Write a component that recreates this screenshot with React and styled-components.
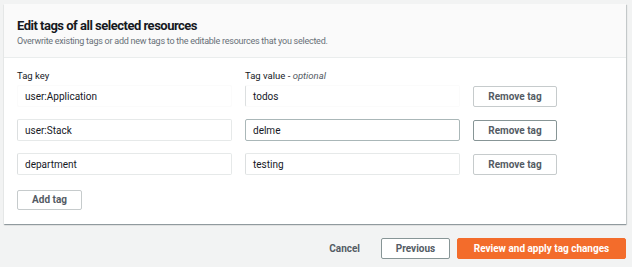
import React from 'react'
import styled, { createGlobalStyle } from 'styled-components'

const Global = createGlobalStyle`
  html, body {
    margin: 0;
    background: #f2f3f3;
    font-family: Roboto, "Noto Sans", sans-serif;
  }
`

const Page = styled.div`
  padding: 4px 6px 10px 4px;
`

const Card = styled.section`
  background: #fff;
  box-shadow: 0 1px 1px 0 rgba(0, 28, 36, 0.3), 1px 1px 1px 0 rgba(0, 28, 36, 0.15);
`

const Header = styled.header`
  box-sizing: border-box;
  height: 54px;
  background: #fafafa;
  border-bottom: 1px solid #eaeded;
  padding: 14px 13px 0;
`

const Title = styled.h2`
  margin: 0;
  font-size: 13px;
  line-height: 16px;
  font-weight: 700;
  color: #16191f;
  letter-spacing: -0.5px;
`

const Subtitle = styled.p`
  margin: 1px 0 0;
  font-size: 9px;
  line-height: 12px;
  color: #687078;
  letter-spacing: -0.25px;
`

const Body = styled.div`
  padding: 11px 13px 14px;
`

const Grid = styled.div`
  display: grid;
  grid-template-columns: 215px 215px 84px;
  column-gap: 13px;
  row-gap: 12px;
  align-items: center;
`

const Label = styled.div`
  font-size: 9.5px;
  line-height: 14px;
  color: #16191f;
  margin-bottom: -10px;

  em {
    font-style: italic;
    color: #545b64;
  }
`

const Input = styled.div`
  box-sizing: border-box;
  height: 22px;
  padding: 0 7px;
  display: flex;
  align-items: center;
  font-size: 10px;
  color: #16191f;
  border: 1px solid ${p => (p.$strong ? '#aab7b8' : p.$faint ? '#fbfbfb' : '#e6e9e9')};
  border-left-color: ${p => (p.$faint && !p.$edge ? '#fbfbfb' : p.$strong ? '#aab7b8' : '#dcdfe0')};
  border-radius: 2px;
  background: #fff;
`

const Button = styled.button`
  box-sizing: border-box;
  height: ${p => p.$h || 21}px;
  width: ${p => p.$w}px;
  padding: 0;
  font-family: inherit;
  font-size: 10px;
  font-weight: 700;
  color: #545b64;
  background: #fff;
  border: 1px solid ${p => (p.$strong ? '#879596' : '#c6cbcc')};
  border-radius: 2px;
`

const AddWrap = styled.div`
  margin-top: 13px;
`

const Footer = styled.footer`
  display: flex;
  justify-content: flex-end;
  align-items: center;
  gap: 7px;
  margin-top: 14px;
`

const LinkButton = styled.button`
  border: none;
  background: none;
  font-family: inherit;
  font-size: 10px;
  font-weight: 700;
  color: #545b64;
  padding: 0;
  margin-right: 14px;
`

const Primary = styled.button`
  box-sizing: border-box;
  height: 21px;
  width: 169px;
  padding: 0;
  font-family: inherit;
  font-size: 10px;
  font-weight: 700;
  color: #fff;
  background: #f36c2b;
  border: 1px solid #f36c2b;
  border-radius: 2px;
`

const tags = [
  { key: 'user:Application', value: 'todos', faint: true },
  { key: 'user:Stack', value: 'delme', strong: true },
  { key: 'department', value: 'testing' },
]

export default function App() {
  return (
    <Page>
      <Global />
      <Card>
        <Header>
          <Title>Edit tags of all selected resources</Title>
          <Subtitle>Overwrite existing tags or add new tags to the editable resources that you selected.</Subtitle>
        </Header>
        <Body>
          <Grid>
            <Label>Tag key</Label>
            <Label>
              Tag value - <em>optional</em>
            </Label>
            <div />
            {tags.map(t => (
              <React.Fragment key={t.key}>
                <Input $faint={t.faint}>{t.key}</Input>
                <Input $faint={t.faint} $edge $strong={t.strong}>{t.value}</Input>
                <Button $w={84} $strong={t.strong}>Remove tag</Button>
              </React.Fragment>
            ))}
          </Grid>
          <AddWrap>
            <Button $w={65} $h={20}>Add tag</Button>
          </AddWrap>
        </Body>
      </Card>
      <Footer>
        <LinkButton>Cancel</LinkButton>
        <Button $w={69} $strong>Previous</Button>
        <Primary>Review and apply tag changes</Primary>
      </Footer>
    </Page>
  )
}
